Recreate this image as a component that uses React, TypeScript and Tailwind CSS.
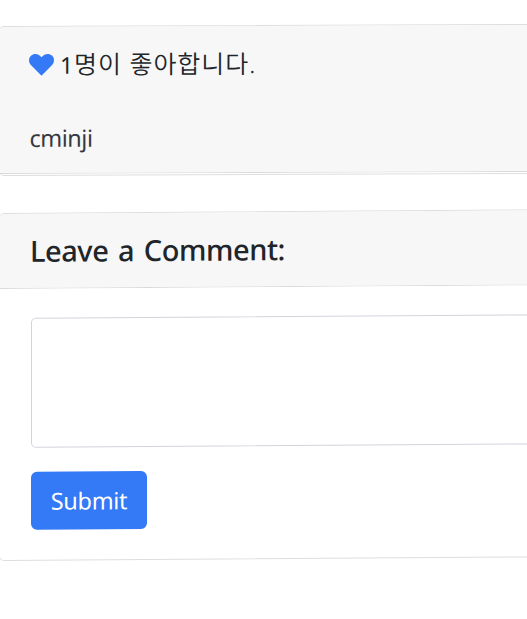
import React from "react";

function LikesCard() {
  return (
    <section className="h-[150px] w-[560px] origin-left -skew-y-[0.22deg] rounded-[5px] border border-[#dedede] bg-white pb-[1px]">
      <div className="flex h-full flex-col rounded-t-[4px] border-b border-[#d9d9d9] bg-[#f7f7f7] pl-[29px]">
        <div className="mt-[20px] flex h-[36px] items-center">
          <svg viewBox="0 0 25 22" className="h-[22px] w-[25px] shrink-0" fill="#3479f6">
            <path d="M12.5 22 1.9 11.2C-.7 8.4-.5 4 2 1.8 4.8-.7 8.8-.3 11.4 2.3L12.5 3.4l1.1-1.1C16.2-.3 20.2-.7 23 1.8c2.5 2.2 2.7 6.6.1 9.4Z" />
          </svg>
          <p className="-mt-[2px] ml-[6px] whitespace-nowrap text-[25px] font-[350] leading-[36px] tracking-[0.95px] text-[#212529]">
            <span className="text-[23px] font-normal">1</span>명이 좋아합니다.
          </p>
        </div>
        <p className="mt-[37px] pl-[0.5px] text-[23.5px] leading-[36px] tracking-[-0.5px] text-[#343940]">cminji</p>
      </div>
    </section>
  );
}

function CommentCard() {
  return (
    <section className="mt-[37px] h-[348px] w-[560px] origin-left -skew-y-[0.38deg] rounded-[5px] border border-[#dedede] bg-white">
      <h5 className="flex h-[75px] items-center rounded-t-[4px] border-b border-[#dadada] bg-[#f7f7f7] pl-[30px] text-[29px] font-medium tracking-[-0.45px] text-[#212529] [word-spacing:2.5px]">
        Leave a Comment:
      </h5>
      <form className="pl-[31px] pt-[29px]" onSubmit={(e) => e.preventDefault()}>
        <textarea
          aria-label="Comment"
          className="block h-[130px] w-[550px] resize-none rounded-[5px] border border-[#d2d4da] bg-white outline-none"
        />
        <button className="mt-[24px] h-[58px] w-[116px] rounded-[6px] bg-[#3479f6] pt-[2px] text-[23.5px] tracking-[-0.3px] text-white">
          Submit
        </button>
      </form>
    </section>
  );
}

export default function App() {
  return (
    <main className="h-[619px] w-[527px] overflow-hidden bg-white pt-[26px] font-['Noto_Sans','Noto_Sans_CJK_KR',sans-serif]">
      <div className="-ml-px">
        <LikesCard />
        <CommentCard />
      </div>
    </main>
  );
}
